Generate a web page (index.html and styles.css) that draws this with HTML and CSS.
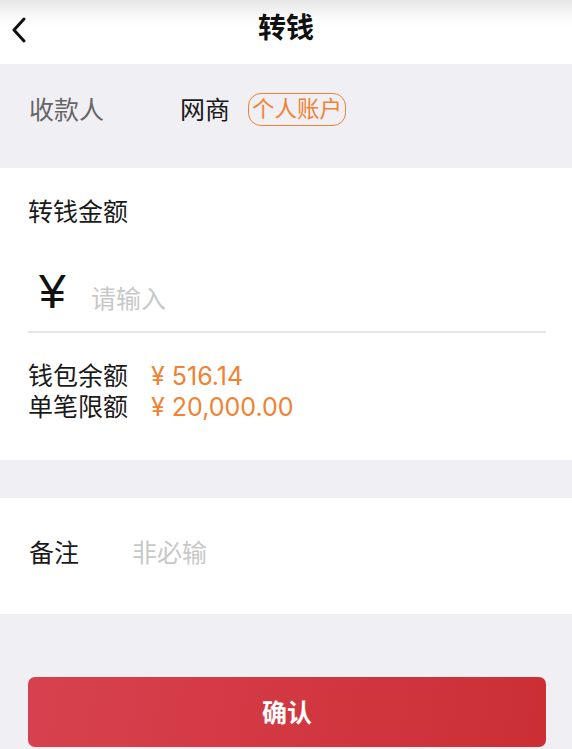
FILE: index.html
```html
<!DOCTYPE html>
<html lang="zh-CN">
<head>
<meta charset="utf-8">
<title>转钱</title>
<link rel="stylesheet" href="styles.css">
</head>
<body>
<div class="page">
  <header class="nav">
    <span class="back">
      <svg width="16" height="26" viewBox="0 0 16 26"><path d="M13 2 L3 13 L13 24" fill="none" stroke="#111" stroke-width="3" stroke-linecap="round" stroke-linejoin="round"/></svg>
    </span>
    <h1 class="nav-title">转钱</h1>
  </header>

  <section class="payee">
    <span class="payee-label">收款人</span>
    <span class="payee-name">网商</span>
    <span class="tag">个人账户</span>
  </section>

  <section class="card amount">
    <div class="amount-title">转钱金额</div>
    <div class="amount-input">
      <span class="yen">¥</span>
      <span class="placeholder">请输入</span>
    </div>
    <div class="info-rows">
      <div class="info-row"><span class="info-label">钱包余额</span><span class="info-value">¥ 516.14</span></div>
      <div class="info-row"><span class="info-label">单笔限额</span><span class="info-value">¥ 20,000.00</span></div>
    </div>
  </section>

  <section class="card remark">
    <span class="remark-label">备注</span>
    <span class="placeholder">非必输</span>
  </section>

  <div class="actions">
    <button class="confirm">确认</button>
  </div>
</div>
</body>
</html>
```

FILE: styles.css
```css
* { box-sizing: border-box; margin: 0; padding: 0; }
html, body { background: #f0eff4; }
body {
  font-family: "Liberation Sans", "Noto Sans CJK SC", sans-serif;
  color: #1a1a1a;
  width: 572px;
  height: 749px;
  overflow: hidden;
}
.page { display: flex; flex-direction: column; }

.nav {
  height: 64px;
  background: linear-gradient(to bottom, #e6e6e6 0px, #fafafa 18px, #ffffff 28px);
  display: flex;
  align-items: center;
  justify-content: center;
  position: relative;
}
.back {
  position: absolute;
  left: 11px;
  top: 17px;
  display: flex;
}
.nav-title {
  font-size: 28px;
  font-weight: 700;
  line-height: 32px;
  color: #111;
  margin-top: -6px;
}

.payee {
  height: 104px;
  display: flex;
  align-items: center;
  padding-left: 29px;
  padding-bottom: 13px;
  font-size: 25px;
  line-height: 30px;
}
.payee-label { width: 151px; color: #666; }
.payee-name { color: #1a1a1a; margin-right: 18px; }
.tag {
  color: #f08232;
  border: 1.5px solid #f08232;
  border-radius: 13px;
  font-size: 22.5px;
  line-height: 30px;
  padding: 1px 3px 0 3px;
}

.card { background: #fff; }

.amount {
  height: 292px;
  padding: 29px 26px 0 28px;
  font-size: 25px;
}
.amount-title { line-height: 30px; }
.amount-input {
  height: 106px;
  display: flex;
  align-items: baseline;
  padding-top: 40px;
  padding-left: 11px;
  border-bottom: 2px solid #e6e6e6;
}
.yen {
  font-family: "Liberation Sans", sans-serif;
  font-size: 48px;
  line-height: 50px;
  width: 52px;
  color: #111;
}
.placeholder { color: #c8c8c8; font-size: 25px; line-height: 30px; }

.info-rows { padding-top: 28px; }
.info-row { display: flex; height: 31px; line-height: 31px; align-items: baseline; }
.info-label { width: 123px; }
.info-value {
  color: #f08232;
  font-family: Inter, "Liberation Sans", sans-serif;
  font-size: 25px;
  line-height: 31px;
}

.remark {
  margin-top: 38px;
  height: 116px;
  display: flex;
  align-items: center;
  padding: 0 28px 6px 29px;
  font-size: 25px;
  line-height: 30px;
}
.remark-label { width: 103px; }

.actions { padding: 63px 26px 0 28px; }
.confirm {
  width: 100%;
  height: 70px;
  border: none;
  border-radius: 7px;
  background: linear-gradient(100deg, #d7414f 0%, #d1363f 60%, #cb2f35 100%);
  color: #fff;
  font-family: "Liberation Sans", "Noto Sans CJK SC", sans-serif;
  font-size: 25px;
  font-weight: 700;
  display: flex;
  align-items: center;
  justify-content: center;
  padding-bottom: 2px;
}
```
